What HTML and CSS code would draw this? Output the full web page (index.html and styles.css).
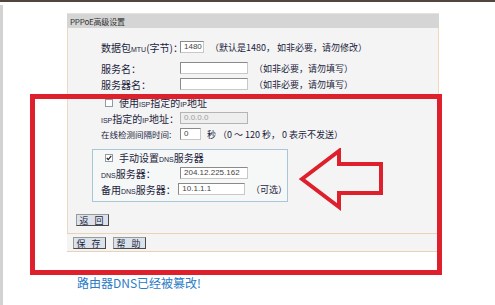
FILE: index.html
```html
<!DOCTYPE html>
<html>
<head>
    <title>PPPoE高级设置</title>
    <link rel="stylesheet" href="styles.css">
</head>
<body>
    <div class="topbar"></div>
    <div class="page">
        <div class="side"></div>
        <div class="main">
            <div class="panel">
                <div class="panel-title">PPPoE高级设置</div>
                <div class="panel-body">
                    <div class="row row-mtu">
                        <span class="label">数据包<small>MTU</small>(字节)：</span>
                        <span class="field short">1480</span>
                        <span class="hint">（默认是1480， 如非必要，请勿修改）</span>
                    </div>
                    <div class="row">
                        <span class="label">服务名：</span>
                        <span class="field"></span>
                        <span class="hint">（如非必要，请勿填写）</span>
                    </div>
                    <div class="row">
                        <span class="label">服务器名：</span>
                        <span class="field"></span>
                        <span class="hint">（如非必要，请勿填写）</span>
                    </div>
                    <div class="row row-check first-check">
                        <span class="check"></span>
                        <span class="check-text">使用<small>ISP</small>指定的<small>IP</small>地址</span>
                    </div>
                    <div class="row">
                        <span class="label"><small>ISP</small>指定的<small>IP</small>地址：</span>
                        <span class="field disabled">0.0.0.0</span>
                    </div>
                    <div class="row">
                        <span class="label narrow">在线检测间隔时间:</span>
                        <span class="field tiny">0</span>
                        <span class="hint">秒 （0 ～ 120 秒， 0 表示不发送）</span>
                    </div>

                    <!-- DNS group -->
                    <div class="dns-box">
                        <div class="row row-check">
                            <span class="check checked">
                                <svg width="8" height="8" viewBox="0 0 8 8"><path d="M1 4 L3 6.2 L7 1.2" fill="none" stroke="#222" stroke-width="1.6"/></svg>
                            </span>
                            <span class="check-text">手动设置<small>DNS</small>服务器</span>
                        </div>
                        <div class="row">
                            <span class="label"><small>DNS</small>服务器：</span>
                            <span class="field">204.12.225.162</span>
                        </div>
                        <div class="row">
                            <span class="label">备用<small>DNS</small>服务器：</span>
                            <span class="field">10.1.1.1</span>
                            <span class="hint">（可选）</span>
                        </div>
                    </div>

                    <button class="btn back">返 回</button>
                </div>
                <div class="panel-foot">
                    <button class="btn">保 存</button>
                    <button class="btn">帮 助</button>
                </div>
            </div>
            <p class="note">路由器DNS已经被篡改!</p>
        </div>
    </div>

    <!-- Annotation overlay -->
    <div class="mark-box"></div>
    <svg class="mark-arrow" width="100" height="70" viewBox="0 0 100 70">
        <polygon points="4,31 41,3 41,16 83,16 83,45 41,45 41,59" fill="none" stroke="#de1f2c" stroke-width="4" stroke-linejoin="miter"/>
    </svg>
</body>
</html>
```

FILE: styles.css
```css
/* Global CSS */
* {
    box-sizing: border-box;
}

body {
    position: relative;
    margin: 0;
    height: 305px;
    overflow: hidden;
    background-color: #fff;
    font-family: "Noto Sans CJK SC", "Liberation Sans", sans-serif;
    color: #1b1d3c;
}

.topbar {
    height: 2px;
    background-color: #51463c;
}

.page {
    display: flex;
    margin-top: 3px;
    height: 300px;
}

.side {
    width: 3px;
    background-color: #d2d2d2;
}

.main {
    padding-left: 64px;
}

/* Panel CSS */
.panel {
    width: 372px;
    margin-top: 8px;
}

.panel-title {
    height: 15px;
    padding-left: 3px;
    line-height: 15px;
    font-size: 8px;
    letter-spacing: -0.2px;
    color: #333;
    background-color: #d5d5d5;
    border-top: 1px solid #e2e2e2;
}

.panel-body {
    padding: 11px 0 7px 8px;
    background-color: #f4f4f4;
    border-left: 1px solid #eed9c0;
    border-right: 1px solid #eed9c0;
}

.row {
    display: flex;
    align-items: center;
    height: 16px;
    margin-left: 25px;
    white-space: nowrap;
}

.row-mtu {
    margin-bottom: 5px;
}

.row-check {
    height: 17px;
    padding-left: 4px;
}

.first-check {
    height: 18px;
    padding-top: 3px;
}

.label {
    width: 79px;
    font-size: 10px;
}

.label.narrow {
    font-size: 8.5px;
}

small {
    font-family: "Liberation Sans", sans-serif;
    font-size: 7px;
}

.field {
    width: 68px;
    height: 12px;
    padding-left: 3px;
    line-height: 10px;
    font-family: "Liberation Sans", sans-serif;
    font-size: 8px;
    color: #444;
    background-color: #fff;
    border: 1px solid #8a8a8a;
    border-right-color: #c8c8c8;
    border-bottom-color: #c8c8c8;
}

.field.short {
    width: 24px;
}

.field.tiny {
    width: 21px;
}

.field.disabled {
    color: #a0a0a0;
    background-color: #eeeeee;
    border-color: #b4b4b4;
}

.hint {
    margin-left: 6px;
    font-size: 9px;
}

.check {
    display: inline-flex;
    align-items: center;
    justify-content: center;
    width: 8px;
    height: 8px;
    background-color: #fff;
    border: 1px solid #8e9aa6;
}

.check-text {
    margin-left: 6px;
    font-size: 10px;
}

/* DNS group */
.dns-box {
    width: 196px;
    margin: 7px 0 0 16px;
    padding: 0 0 4px 8px;
    border: 1px solid #a9c6d6;
    background-color: #f6f7f7;
}

.dns-box .row {
    margin-left: 0;
}

.dns-box .row-check {
    height: 15px;
}

/* Buttons */
.btn {
    display: block;
    width: 33px;
    height: 12px;
    padding: 0;
    font-family: "Noto Sans CJK SC", sans-serif;
    font-size: 9px;
    line-height: 9px;
    color: #1b1d3c;
    letter-spacing: 2px;
    background-color: #dbe2ea;
    border: 1px solid #4a4a4a;
    border-top-color: #9a9a9a;
    border-left-color: #9a9a9a;
}

.back {
    margin-top: 12px;
}

.panel-foot {
    display: flex;
    gap: 7px;
    height: 19px;
    padding: 3px 0 0 6px;
    background-color: #f4f4f4;
    border-top: 1px solid #ead2b6;
    border-bottom: 1px solid #ead2b6;
}

.note {
    margin: 24px 0 0 10px;
    font-size: 12px;
    line-height: 14px;
    color: #2b7bc6;
}

/* Red annotation */
.mark-box {
    position: absolute;
    left: 30px;
    top: 94px;
    width: 412px;
    height: 181px;
    border: 5px solid #de1f2c;
}

.mark-arrow {
    position: absolute;
    left: 298px;
    top: 148px;
}
```
